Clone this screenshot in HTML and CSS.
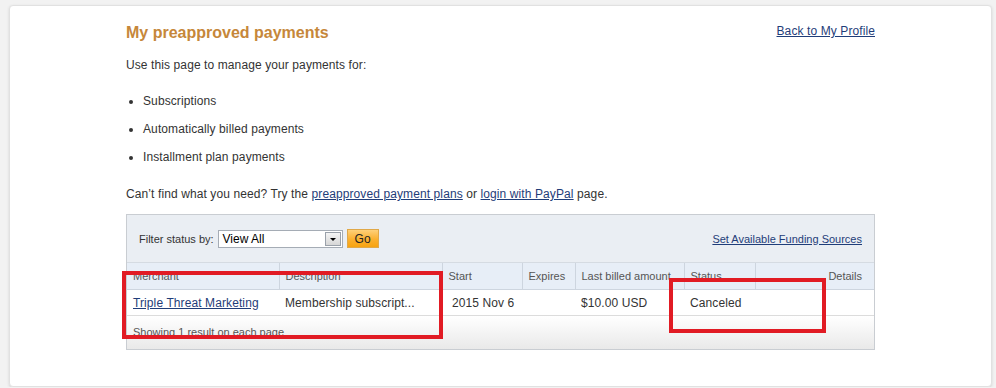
FILE: index.html
```html
<!DOCTYPE html>
<html lang="en">
<head>
    <meta charset="UTF-8">
    <meta name="viewport" content="width=device-width, initial-scale=1.0">
    <title>My preapproved payments</title>
    <link rel="stylesheet" href="styles.css">
</head>
<body>
    <div class="card">
        <div class="top">
            <h1>My preapproved payments</h1>
            <a href="#" class="link">Back to My Profile</a>
        </div>
        <p class="intro">Use this page to manage your payments for:</p>
        <ul class="kinds">
            <li>Subscriptions</li>
            <li>Automatically billed payments</li>
            <li>Installment plan payments</li>
        </ul>
        <p class="help">Can’t find what you need? Try the <a href="#" class="link">preapproved payment plans</a> or <a href="#" class="link">login with PayPal</a> page.</p>

        <div class="box">
            <div class="filter">
                <div class="filter-left">
                    <span class="filter-label">Filter status by:</span>
                    <div class="fake-select">
                        <span>View All</span>
                        <span class="arrow"></span>
                    </div>
                    <button class="go">Go</button>
                </div>
                <a href="#" class="link small">Set Available Funding Sources</a>
            </div>
            <table class="payments">
                <colgroup>
                    <col style="width:152px">
                    <col style="width:163px">
                    <col style="width:80px">
                    <col style="width:53px">
                    <col style="width:109px">
                    <col style="width:71px">
                    <col>
                </colgroup>
                <thead>
                    <tr>
                        <th>Merchant</th>
                        <th>Description</th>
                        <th>Start</th>
                        <th>Expires</th>
                        <th>Last billed amount</th>
                        <th>Status</th>
                        <th class="right">Details</th>
                    </tr>
                </thead>
                <tbody>
                    <tr>
                        <td><a href="#" class="link">Triple Threat Marketing</a></td>
                        <td>Membership subscript...</td>
                        <td class="start">2015 Nov 6</td>
                        <td></td>
                        <td>$10.00 USD</td>
                        <td>Canceled</td>
                        <td></td>
                    </tr>
                </tbody>
            </table>
            <div class="footer">Showing 1 result on each page</div>

            <!-- annotation boxes -->
            <div class="mark mark-one"></div>
            <div class="mark mark-two"></div>
        </div>
    </div>
</body>
</html>
```

FILE: styles.css
```css
body {
    margin: 0;
    padding: 0;
    background: #f2f2f2;
    font-family: "Liberation Sans", Arial, sans-serif;
    color: #333;
    font-size: 12px;
}

.card {
    margin: 5px 4px 0 9px;
    height: 382px;
    box-sizing: border-box;
    padding: 17px 116px 0 116px;
    background: #fff;
    border: 1px solid #e1e1e1;
    border-radius: 4px;
    box-shadow: 0 1px 3px rgba(0,0,0,0.12);
}

.top {
    display: flex;
    justify-content: space-between;
    align-items: flex-start;
}

h1 {
    margin: 0;
    font-size: 16px;
    line-height: 20px;
    color: #c6873a;
    font-weight: bold;
}

.top .link {
    line-height: 17px;
    letter-spacing: 0.1px;
}

.link {
    color: #1f3d79;
    text-decoration: underline;
}

.small {
    font-size: 11px;
}

.intro {
    margin: 14px 0 0;
    line-height: 16px;
    letter-spacing: 0.1px;
}

.kinds {
    margin: 20px 0 0;
    padding-left: 17px;
}

.kinds li {
    line-height: 16px;
    margin-bottom: 12px;
    letter-spacing: 0.1px;
}

.kinds li:last-child {
    margin-bottom: 0;
}

.help {
    margin: 21px 0 0;
    line-height: 16px;
    letter-spacing: 0.1px;
}

.box {
    position: relative;
    margin-top: 12px;
    border: 1px solid #c9cdd2;
}

.filter {
    height: 48px;
    box-sizing: border-box;
    padding: 0 12px 0 12px;
    background: #eaeef3;
    display: flex;
    justify-content: space-between;
    align-items: center;
    border-bottom: 1px solid #d5dbe2;
}

.filter-left {
    display: flex;
    align-items: center;
    gap: 4px;
}

.filter-label {
    font-size: 11px;
    color: #333;
}

.fake-select {
    width: 125px;
    height: 18px;
    box-sizing: border-box;
    border: 1px solid #a5acb5;
    background: #fff;
    display: flex;
    justify-content: space-between;
    align-items: center;
    padding: 0 1px 0 4px;
    font-size: 12px;
    color: #000;
}

.arrow {
    width: 16px;
    height: 14px;
    box-sizing: border-box;
    border: 1px solid #9aa1aa;
    background: linear-gradient(#f4f4f4, #d6d6d6);
    position: relative;
}

.arrow::after {
    content: "";
    position: absolute;
    left: 4px;
    top: 5px;
    border-left: 3px solid transparent;
    border-right: 3px solid transparent;
    border-top: 3px solid #000;
}

.go {
    width: 32px;
    height: 19px;
    padding: 0;
    border: 1px solid #e0a848;
    background: linear-gradient(#fed07a, #fbb02f 55%, #f7a310);
    font-family: "Liberation Sans", Arial, sans-serif;
    font-size: 12px;
    color: #222;
}

.payments {
    width: 100%;
    border-collapse: collapse;
    table-layout: fixed;
}

.payments th {
    background: #e7eef7;
    height: 26px;
    padding: 0 5px 0 6px;
    text-align: left;
    font-weight: normal;
    font-size: 11px;
    color: #555;
    border-left: 1px solid #cdd5df;
    border-bottom: 1px solid #cdd5df;
}

.payments th:first-child {
    border-left: none;
}

.payments th.right {
    text-align: right;
    padding-right: 12px;
}

.payments td {
    height: 25px;
    padding: 0 5px 0 6px;
    font-size: 12px;
    color: #333;
    border-bottom: 1px solid #dcdcdc;
    white-space: nowrap;
    overflow: hidden;
    letter-spacing: 0.1px;
}

.payments td.start {
    padding-left: 10px;
}

.footer {
    height: 33px;
    box-sizing: border-box;
    padding: 10px 0 0 6px;
    font-size: 11px;
    color: #555;
    background: linear-gradient(#fff, #e9e9e9);
}

.mark {
    position: absolute;
    box-sizing: border-box;
    border: 4px solid #e11b24;
}

.mark-one {
    left: -5px;
    top: 56px;
    width: 321px;
    height: 68px;
}

.mark-two {
    left: 542px;
    top: 63px;
    width: 157px;
    height: 55px;
}
```
